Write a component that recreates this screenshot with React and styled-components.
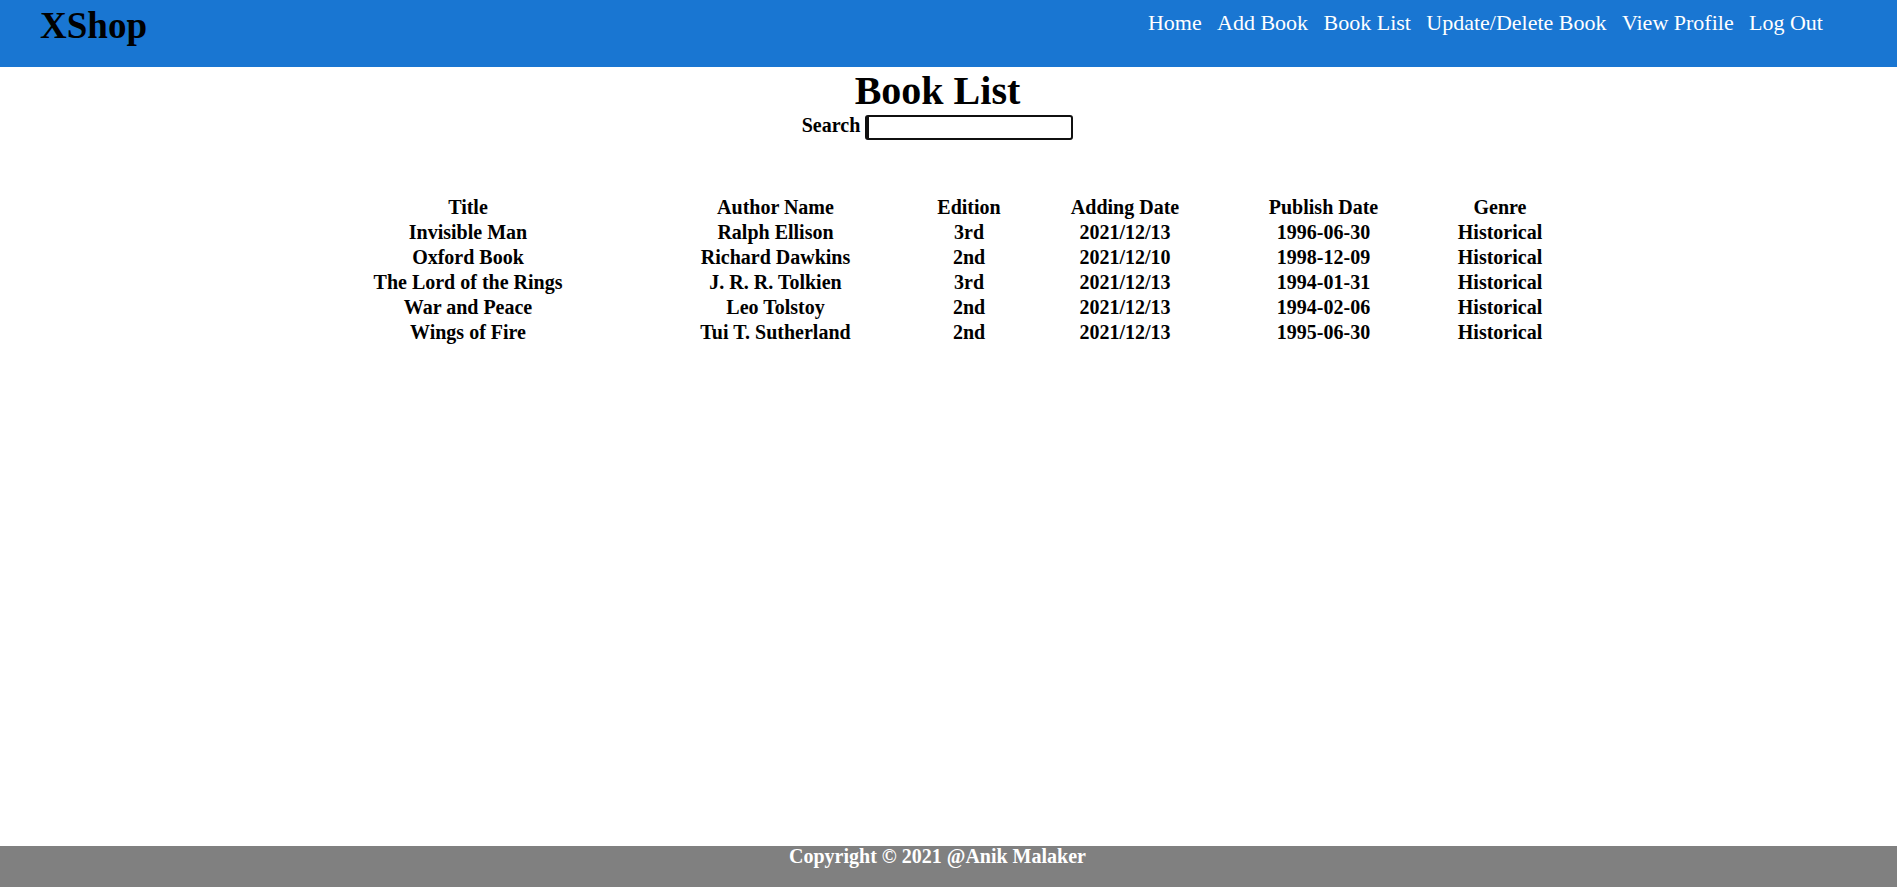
import React from 'react'
import styled, { createGlobalStyle } from 'styled-components'

const GlobalStyle = createGlobalStyle`
  html, body {
    margin: 0;
    padding: 0;
    background: #fff;
  }
  body {
    font-family: "Liberation Serif", "Times New Roman", serif;
    color: #000;
  }
`

const Page = styled.div`
  display: flex;
  flex-direction: column;
  min-height: 100vh;
`

const Header = styled.header`
  display: flex;
  justify-content: space-between;
  align-items: flex-start;
  height: 67px;
  background: #1976d2;
  padding: 0 74px 0 40px;
  box-sizing: border-box;
`

const Logo = styled.div`
  font-size: 37px;
  font-weight: 700;
  line-height: 51px;
  color: #000;
`

const Nav = styled.nav`
  display: flex;
  gap: 15.4px;
  padding-top: 11px;
`

const NavLink = styled.a`
  font-size: 22px;
  line-height: 24px;
  color: #fff;
  text-decoration: none;
  cursor: pointer;
`

const Main = styled.main`
  padding-right: 22px;
  text-align: center;

  .title {
    margin: 0;
    font-size: 40px;
    font-weight: 700;
    line-height: 48px;
  }
`

const SearchRow = styled.div`
  display: flex;
  justify-content: center;
  align-items: flex-start;
  gap: 5px;
  font-size: 20px;
  font-weight: 700;
  line-height: 20px;
`

const SearchInput = styled.input`
  width: 208px;
  height: 25px;
  box-sizing: border-box;
  border: 2px solid #101010;
  border-left-width: 4px;
  border-radius: 3px;
  outline: none;
  padding: 0 2px;
  font-size: 16px;
  background: #fff;
`

const TableWrap = styled.div`
  padding-right: 5px;
  margin-top: 55px;
`

const Table = styled.table`
  width: 1280px;
  margin: 0 auto;
  table-layout: fixed;
  border-collapse: separate;
  border-spacing: 0;

  th, td {
    padding: 1px 0;
    font-size: 20px;
    font-weight: 700;
    line-height: 23px;
    text-align: center;
    white-space: nowrap;
  }
`

const Footer = styled.footer`
  margin-top: auto;
  height: 41px;
  background: #808080;
  color: #fff;
  text-align: center;
  padding-right: 22px;
  font-size: 20px;
  font-weight: 700;
  line-height: 20px;
`

const links = ['Home', 'Add Book', 'Book List', 'Update/Delete Book', 'View Profile', 'Log Out']

const columns = [
  { label: 'Title', width: 346 },
  { label: 'Author Name', width: 269 },
  { label: 'Edition', width: 118 },
  { label: 'Adding Date', width: 194 },
  { label: 'Publish Date', width: 203 },
  { label: 'Genre', width: 150 },
]

const books = [
  ['Invisible Man', 'Ralph Ellison', '3rd', '2021/12/13', '1996-06-30', 'Historical'],
  ['Oxford Book', 'Richard Dawkins', '2nd', '2021/12/10', '1998-12-09', 'Historical'],
  ['The Lord of the Rings', 'J. R. R. Tolkien', '3rd', '2021/12/13', '1994-01-31', 'Historical'],
  ['War and Peace', 'Leo Tolstoy', '2nd', '2021/12/13', '1994-02-06', 'Historical'],
  ['Wings of Fire', 'Tui T. Sutherland', '2nd', '2021/12/13', '1995-06-30', 'Historical'],
]

export default function App() {
  return (
    <Page>
      <GlobalStyle />
      <Header>
        <Logo>XShop</Logo>
        <Nav>
          {links.map(l => (
            <NavLink key={l}>{l}</NavLink>
          ))}
        </Nav>
      </Header>

      <Main>
        <h1 className="title">Book List</h1>
        <SearchRow>
          <span>Search</span>
          <SearchInput type="text" />
        </SearchRow>

        <TableWrap>
          <Table>
            <colgroup>
              {columns.map(c => (
                <col key={c.label} style={{ width: c.width }} />
              ))}
            </colgroup>
            <thead>
              <tr>
                {columns.map(c => (
                  <th key={c.label}>{c.label}</th>
                ))}
              </tr>
            </thead>
            <tbody>
              {books.map(b => (
                <tr key={b[0]}>
                  {b.map((cell, i) => (
                    <td key={i}>{cell}</td>
                  ))}
                </tr>
              ))}
            </tbody>
          </Table>
        </TableWrap>
      </Main>

      <Footer>Copyright © 2021 @Anik Malaker</Footer>
    </Page>
  )
}
